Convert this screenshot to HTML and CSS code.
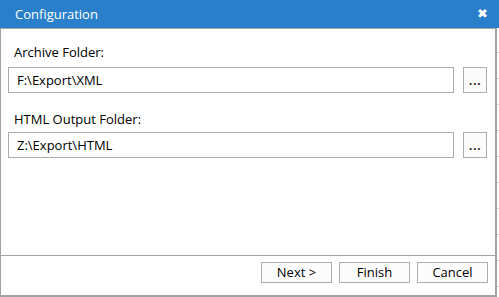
FILE: index.html
```html
<!DOCTYPE html>
<html>
<head>
<meta charset="utf-8">
<link rel="stylesheet" href="styles.css">
</head>
<body>
<div class="titlebar">
  <span class="title">Configuration</span>
  <span class="close">&#10006;</span>
</div>
<div class="main">
  <div class="panel">
    <div class="content">
      <div class="label first">Archive Folder:</div>
      <div class="row">
        <div class="input">F:\Export\XML</div>
        <div class="browse">...</div>
      </div>
      <div class="label second">HTML Output Folder:</div>
      <div class="row">
        <div class="input">Z:\Export\HTML</div>
        <div class="browse">...</div>
      </div>
    </div>
    <div class="footer">
      <div class="btn">Next &gt;</div>
      <div class="btn">Finish</div>
      <div class="btn">Cancel</div>
    </div>
  </div>
  <div class="strip"></div>
</div>
</body>
</html>
```

FILE: styles.css
```css
html, body {
  margin: 0;
  padding: 0;
  width: 499px;
  height: 297px;
  overflow: hidden;
  background: #ffffff;
  font-family: "Open Sans", "Noto Sans", sans-serif;
  font-size: 13px;
  color: #000000;
}
body {
  display: flex;
  flex-direction: column;
}
.titlebar {
  height: 28px;
  flex: none;
  background: #2a7fca;
  display: flex;
  align-items: center;
  justify-content: space-between;
  padding: 0 11px 0 15px;
  color: #ffffff;
}
.title {
  font-size: 13px;
  line-height: 28px;
  padding-bottom: 1px;
}
.close {
  font-size: 13px;
  line-height: 13px;
  font-family: "DejaVu Sans", sans-serif;
  font-weight: bold;
  padding-bottom: 1px;
}
.main {
  flex: 1;
  display: flex;
}
.panel {
  width: 494px;
  border-top: 1px solid #a3a3a3;
  border-left: 1px solid #a3a3a3;
  border-right: 2px solid #a3a3a3;
  border-bottom: 2px solid #a3a3a3;
  display: flex;
  flex-direction: column;
}
.content {
  flex: 1;
  padding: 0 8px 0 7px;
}
.label {
  font-size: 13px;
  line-height: 16px;
  height: 16px;
  padding-left: 6px;
}
.label.first {
  margin-top: 15px;
  margin-bottom: 7px;
}
.label.second {
  margin-top: 18px;
  margin-bottom: 5px;
}
.row {
  display: flex;
  gap: 9px;
  height: 26px;
}
.input {
  flex: 1;
  border: 1px solid #ababab;
  box-sizing: border-box;
  padding-left: 8px;
  line-height: 24px;
  font-size: 13px;
}
.browse {
  width: 24px;
  box-sizing: border-box;
  border: 1px solid #ababab;
  background: #fbfbfb;
  text-align: center;
  line-height: 24px;
  font-size: 13px;
  font-weight: bold;
  color: #333333;
  letter-spacing: 0.5px;
}
.footer {
  height: 40px;
  border-top: 1px solid #a3a3a3;
  display: flex;
  justify-content: flex-end;
  align-items: flex-start;
  gap: 7px;
  padding: 6px 7px 0 0;
  box-sizing: border-box;
}
.btn {
  width: 71px;
  height: 21px;
  box-sizing: border-box;
  border: 1px solid #adadad;
  background: #fcfcfc;
  text-align: center;
  line-height: 19px;
  font-size: 13px;
}
.strip {
  flex: 1;
  background: repeating-linear-gradient(to bottom, #ffffff 0, #ffffff 25px, #d4d4d4 25px, #d4d4d4 26px);
  background-position: 0 -1px;
}
```
